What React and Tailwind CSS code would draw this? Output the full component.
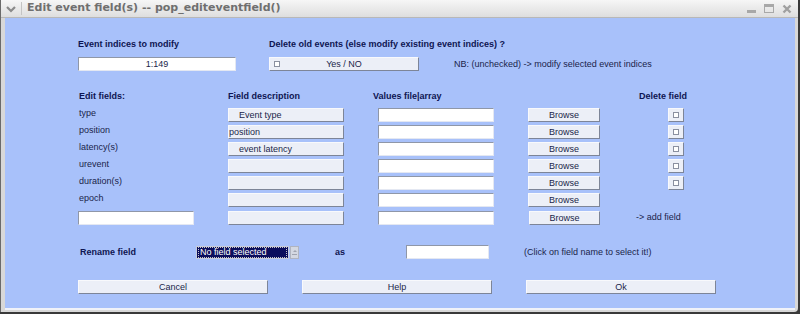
import React from "react";

const font = { fontFamily: '"Liberation Sans", Arial, sans-serif' };

const fields = ["type", "position", "latency(s)", "urevent", "duration(s)", "epoch"];
const descs = ["Event type", "position", "event latency", "", "", ""];

const Input = ({ className = "", children }) => (
  <div
    className={`h-[14px] bg-white border-t border-l border-[#8f97a8] border-r border-b border-r-[#e4e8f2] border-b-[#e4e8f2] flex items-center justify-center text-[9px] leading-none text-[#1a1f4a] ${className}`}
  >
    {children}
  </div>
);

const Raised = ({ className = "", children }) => (
  <div
    className={`h-[14px] bg-[#eceff7] border-t border-l border-[#f8f9fc] border-r border-b border-r-[#7d8598] border-b-[#7d8598] flex items-center text-[9px] leading-none text-[#1a1f4a] ${className}`}
  >
    {children}
  </div>
);

const Box = () => (
  <span className="inline-block w-[6px] h-[6px] bg-white border border-[#8a90a0]" />
);

const Label = ({ className = "", children }) => (
  <div className={`text-[9px] font-bold text-[#0e1552] leading-[10px] ${className}`}>{children}</div>
);

function TitleBar() {
  return (
    <div className="h-[18px] flex items-center bg-gradient-to-b from-[#f6f6f6] to-[#dedede] border-b border-[#b8b8b8]">
      <svg width="10" height="8" viewBox="0 0 10 8" className="ml-[5px]">
        <path d="M1 2 L5 6 L9 2" stroke="#8a8a8a" strokeWidth="2.2" fill="none" />
      </svg>
      <div className="ml-[5px] w-px h-[13px] bg-[#c4c4c4]" />
      <span
        className="ml-[5px] text-[11px] font-bold text-[#6f6f6f]"
        style={{ fontFamily: '"DejaVu Sans", sans-serif' }}
      >
        Edit event field(s) -- pop_editeventfield()
      </span>
      <div className="ml-auto mr-[6px] flex items-center gap-[8px]">
        <div className="w-[9px] h-[3px] bg-[#a8a8a8] mt-[6px]" />
        <div className="w-[10px] h-[9px] border border-[#a8a8a8] border-t-[3px]" />
        <svg width="10" height="10" viewBox="0 0 10 10">
          <path d="M1.5 1.5 L8.5 8.5 M8.5 1.5 L1.5 8.5" stroke="#a0a0a0" strokeWidth="2.4" />
        </svg>
      </div>
    </div>
  );
}

export default function App() {
  return (
    <div className="w-[800px] h-[314px] bg-[#3a3a3a] overflow-hidden" style={font}>
      <div className="w-[798px] h-[312px] bg-[#d8d8d8] border-l border-[#6a6a6a] flex flex-col rounded-br-[4px]">
        <TitleBar />
        <div className="flex-1 ml-[4px] mr-[3px] mb-[2px] bg-[#a8c1fa] border-b-2 border-[#f0f2f8] pl-[73px] text-[#1a1f4a]">
          {/* top section */}
          <div className="mt-[21px] flex">
            <div className="w-[191px]">
              <Label>Event indices to modify</Label>
              <Input className="mt-[8px] w-[158px]">1:149</Input>
            </div>
            <div>
              <Label>Delete old events (else modify existing event indices) ?</Label>
              <div className="mt-[8px] flex items-center">
                <Raised className="w-[150px] relative justify-center">
                  <span className="absolute left-[4px] top-[2px]"><Box /></span>
                  Yes / NO
                </Raised>
                <span className="ml-[35px] text-[9px] leading-none">NB: (unchecked) -&gt; modify selected event indices</span>
              </div>
            </div>
          </div>

          {/* table */}
          <div className="mt-[20px] grid grid-cols-[116px_116px_116px_72px_100px] gap-x-[34px]">
            <Label className="pl-[1px]">Edit fields:</Label>
            <Label>Field description</Label>
            <Label className="-ml-[5px]">Values file|array</Label>
            <div />
            <Label className="pl-[5px]">Delete field</Label>
          </div>
          <div className="mt-[7px] grid grid-cols-[116px_116px_116px_72px_100px] gap-x-[34px] gap-y-[3px] items-center">
            {fields.map((f, i) => (
              <React.Fragment key={f}>
                <div className="text-[9px] leading-none pl-[1px] -mt-[4px]">{f}</div>
                <Raised className={i === 1 ? "justify-start pl-0" : "justify-start pl-[10px]"}>{descs[i]}</Raised>
                <Input />
                <Raised className="justify-center">Browse</Raised>
                <div className="pl-[34px]">
                  {i < 5 && (
                    <Raised className="w-[16px] h-[13px] justify-center">
                      <Box />
                    </Raised>
                  )}
                </div>
              </React.Fragment>
            ))}
            <Input className="mt-[1px]" />
            <Raised className="mt-[1px]" />
            <Input className="mt-[1px]" />
            <Raised className="mt-[1px] ml-[1px] justify-center">Browse</Raised>
            <div className="text-[9px] leading-none pl-[2px]">-&gt; add field</div>
          </div>

          {/* rename row */}
          <div className="mt-[20px] flex items-center">
            <span className="w-[118px] text-[9px] font-bold text-[#0e1552] leading-none pl-[2px]">Rename field</span>
            <div className="w-[93px] h-[13px] bg-[#0b0e5c] border border-[#c8ccd8] flex items-center px-[1px]">
              <span className="text-[9px] leading-[9px] text-white border border-dotted border-[#c8c8c8] px-[1px] w-full">
                No field selected
              </span>
            </div>
            <div className="ml-[1px] w-[9px] h-[13px] bg-[#d4d8e2] border border-[#b0b4c0] flex flex-col items-center justify-center gap-[2px]">
              <div className="w-0 h-0 border-l-[2px] border-r-[2px] border-b-[2px] border-l-transparent border-r-transparent border-b-[#a0a4b0]" />
              <div className="w-[5px] h-px bg-[#a0a4b0]" />
            </div>
            <span className="ml-[36px] w-[71px] text-[9px] font-bold text-[#0e1552] leading-none">as</span>
            <Input className="w-[83px] h-[13px]" />
            <span className="ml-[35px] text-[9px] leading-none">(Click on field name to select it!)</span>
          </div>

          {/* buttons */}
          <div className="mt-[21px] flex gap-[34px]">
            <Raised className="w-[190px] justify-center">Cancel</Raised>
            <Raised className="w-[190px] justify-center">Help</Raised>
            <Raised className="w-[190px] justify-center">Ok</Raised>
          </div>
        </div>
      </div>
    </div>
  );
}
